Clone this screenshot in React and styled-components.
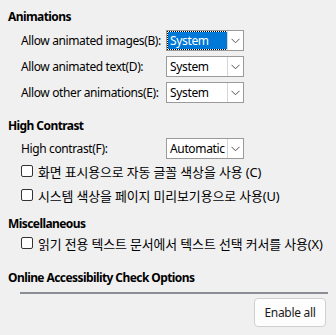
import React from "react";
import styled, { createGlobalStyle } from "styled-components";

const Global = createGlobalStyle`
  html, body { margin: 0; padding: 0; background: #f0f0f0; }
  body { font-family: "Noto Sans", "Noto Sans CJK KR", sans-serif; font-size: 12px; color: #000; }
`;

const Page = styled.div`
  width: 336px;
  height: 335px;
  box-sizing: border-box;
  padding: 8px 8px 0 8px;
  display: flex;
  flex-direction: column;
`;

const Heading = styled.div`
  font-weight: 700;
  font-size: 12px;
  line-height: 18px;
  height: 18px;
  margin-top: ${(p) => p.$mt || 0}px;
  letter-spacing: -0.58px;
`;

const Group = styled.div`
  padding-left: 13px;
  display: flex;
  flex-direction: column;
`;

const Row = styled.div`
  display: flex;
  align-items: center;
  height: 21px;
  margin-top: ${(p) => p.$mt || 0}px;
`;

const Label = styled.span`
  width: 145px;
  flex: none;
  white-space: nowrap;
  letter-spacing: -0.38px;
`;

const Combo = styled.div`
  width: 78px;
  height: 21px;
  box-sizing: border-box;
  border: 1px solid #9a9a9a;
  background: #fff;
  display: flex;
  align-items: stretch;
`;

const ComboText = styled.div`
  flex: 1;
  display: flex;
  align-items: center;
  padding-left: 2px;
  margin: 1px 0 1px 1px;
  white-space: nowrap;
  overflow: hidden;
  letter-spacing: -0.35px;
  ${(p) =>
    p.$selected &&
    `
    background: #0078d7;
    color: #fff;
    outline: 1px dotted #000;
  `}
`;

const ComboArrow = styled.div`
  width: 15px;
  border-left: 1px solid #d6d6d6;
  display: flex;
  align-items: center;
  justify-content: center;
`;

const CheckRow = styled.label`
  display: flex;
  align-items: center;
  height: 20px;
  margin-top: ${(p) => p.$mt || 0}px;
  white-space: nowrap;
  font-size: 12.9px;
  letter-spacing: -0.1px;
`;

const Box = styled.span`
  width: 12px;
  height: 12px;
  box-sizing: border-box;
  border: 1px solid #333;
  border-radius: 2px;
  background: #fff;
  margin-right: 5px;
  flex: none;
`;

const Separator = styled.div`
  margin: 5px 0 0 12px;
  height: 2px;
  background: #8a8d93;
`;

const ButtonBar = styled.div`
  display: flex;
  justify-content: flex-end;
  margin-top: 4px;
`;

const Button = styled.button`
  width: 72px;
  height: 29px;
  box-sizing: border-box;
  border: 1px solid #d0d0d0;
  border-radius: 4px;
  background: #fdfdfd;
  font-family: inherit;
  font-size: 12px;
  letter-spacing: -0.3px;
  color: #1a1a1a;
  padding: 0;
  margin-right: 2px;
`;

const Chevron = () => (
  <svg width="9" height="6" viewBox="0 0 9 6">
    <path d="M0.5 0.8 L4.5 4.8 L8.5 0.8" fill="none" stroke="#555" strokeWidth="1" />
  </svg>
);

const Select = ({ value, selected }) => (
  <Combo>
    <ComboText $selected={selected}>{value}</ComboText>
    <ComboArrow>
      <Chevron />
    </ComboArrow>
  </Combo>
);

export default function App() {
  return (
    <>
      <Global />
      <Page>
        <Heading>Animations</Heading>
        <Group>
          <Row $mt={4}>
            <Label>Allow animated images(B):</Label>
            <Select value="System" selected />
          </Row>
          <Row $mt={5}>
            <Label>Allow animated text(D):</Label>
            <Select value="System" />
          </Row>
          <Row $mt={5}>
            <Label>Allow other animations(E):</Label>
            <Select value="System" />
          </Row>
        </Group>

        <Heading $mt={14}>High Contrast</Heading>
        <Group>
          <Row $mt={3}>
            <Label>High contrast(F):</Label>
            <Select value="Automatic" />
          </Row>
          <CheckRow $mt={2}>
            <Box />
            화면 표시용으로 자동 글꼴 색상을 사용 (C)
          </CheckRow>
          <CheckRow $mt={4}>
            <Box />
            시스템 색상을 페이지 미리보기용으로 사용(U)
          </CheckRow>
        </Group>

        <Heading $mt={10}>Miscellaneous</Heading>
        <Group>
          <CheckRow $mt={0}>
            <Box />
            읽기 전용 텍스트 문서에서 텍스트 선택 커서를 사용(X)
          </CheckRow>
        </Group>

        <Heading $mt={16}>Online Accessibility Check Options</Heading>
        <Separator />
        <ButtonBar>
          <Button>Enable all</Button>
        </ButtonBar>
      </Page>
    </>
  );
}
